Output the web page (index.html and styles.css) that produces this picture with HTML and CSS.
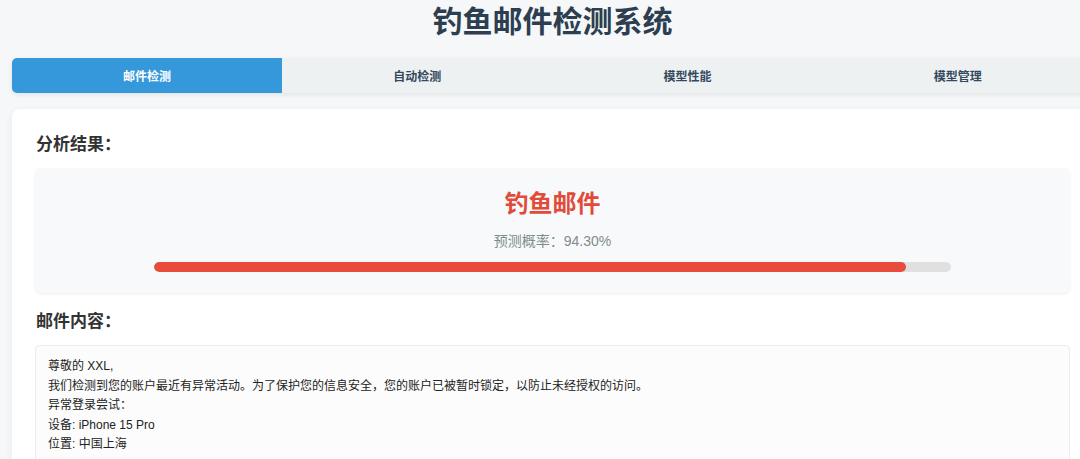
FILE: index.html
```html
<!DOCTYPE html>
<html lang="zh-CN">
<head>
<meta charset="utf-8">
<title>钓鱼邮件检测系统</title>
<link rel="stylesheet" href="styles.css">
</head>
<body>
<div class="page">
  <h1 class="title">钓鱼邮件检测系统</h1>
  <nav class="tabs">
    <div class="tab active">邮件检测</div>
    <div class="tab">自动检测</div>
    <div class="tab">模型性能</div>
    <div class="tab">模型管理</div>
  </nav>
  <section class="card">
    <h2 class="heading">分析结果：</h2>
    <div class="result">
      <div class="verdict">钓鱼邮件</div>
      <div class="prob">预测概率：94.30%</div>
      <div class="bar"><div class="fill" style="width: 94.3%"></div></div>
    </div>
    <h2 class="heading heading-2">邮件内容：</h2>
    <div class="mail">
      <div class="line">尊敬的 XXL,</div>
      <div class="line">我们检测到您的账户最近有异常活动。为了保护您的信息安全，您的账户已被暂时锁定，以防止未经授权的访问。</div>
      <div class="line">异常登录尝试：</div>
      <div class="line">设备: iPhone 15 Pro</div>
      <div class="line">位置: 中国上海</div>
    </div>
  </section>
</div>
</body>
</html>
```
FILE: styles.css
```css
html, body {
  margin: 0;
  padding: 0;
  background: #f5f7f8;
  overflow: hidden;
  height: 459px;
  font-family: "Liberation Sans", "Noto Sans CJK SC", sans-serif;
}

.page {
  width: 1081px;
  margin-left: 12px;
  padding-top: 4px;
}

.title {
  margin: 0;
  font-size: 30px;
  line-height: 36px;
  font-weight: 700;
  color: #2c3e50;
  text-align: center;
}

.tabs {
  margin-top: 18px;
  display: flex;
  height: 35px;
  border-radius: 5px;
  overflow: hidden;
  background: #eef1f2;
  box-shadow: 0 2px 5px rgba(0, 0, 0, 0.08);
}

.tab {
  flex: 1;
  display: flex;
  align-items: center;
  justify-content: center;
  font-size: 12px;
  font-weight: 700;
  color: #34495e;
}

.tab.active {
  background: #3498db;
  color: #ffffff;
}

.card {
  margin-top: 16px;
  background: #ffffff;
  border-radius: 8px;
  box-shadow: 0 2px 8px rgba(0, 0, 0, 0.06);
  padding: 24px 23px 20px 23px;
}

.heading {
  margin: 0 0 11px 1px;
  font-size: 17px;
  line-height: 24px;
  font-weight: 700;
  color: #333333;
}

.heading-2 {
  margin-top: 17px;
}

.result {
  background: #f8f9fa;
  border-radius: 6px;
  box-shadow: 0 1px 3px rgba(0, 0, 0, 0.07);
  padding: 20px 20px 21px;
  display: flex;
  flex-direction: column;
  align-items: center;
}

.verdict {
  font-size: 24px;
  line-height: 32px;
  font-weight: 700;
  color: #e04b3a;
}

.prob {
  margin-top: 11px;
  font-size: 14px;
  line-height: 20px;
  color: #7f8c8d;
}

.bar {
  margin-top: 11px;
  width: 797px;
  height: 10px;
  border-radius: 5px;
  background: #e0e0e0;
  overflow: hidden;
}

.fill {
  height: 100%;
  border-radius: 5px;
  background: #e74c3c;
}

.mail {
  background: #fcfcfc;
  border: 1px solid #ececec;
  border-radius: 4px;
  padding: 11px 12px 12px;
  font-size: 12px;
  line-height: 19.5px;
  color: #222222;
}
```
